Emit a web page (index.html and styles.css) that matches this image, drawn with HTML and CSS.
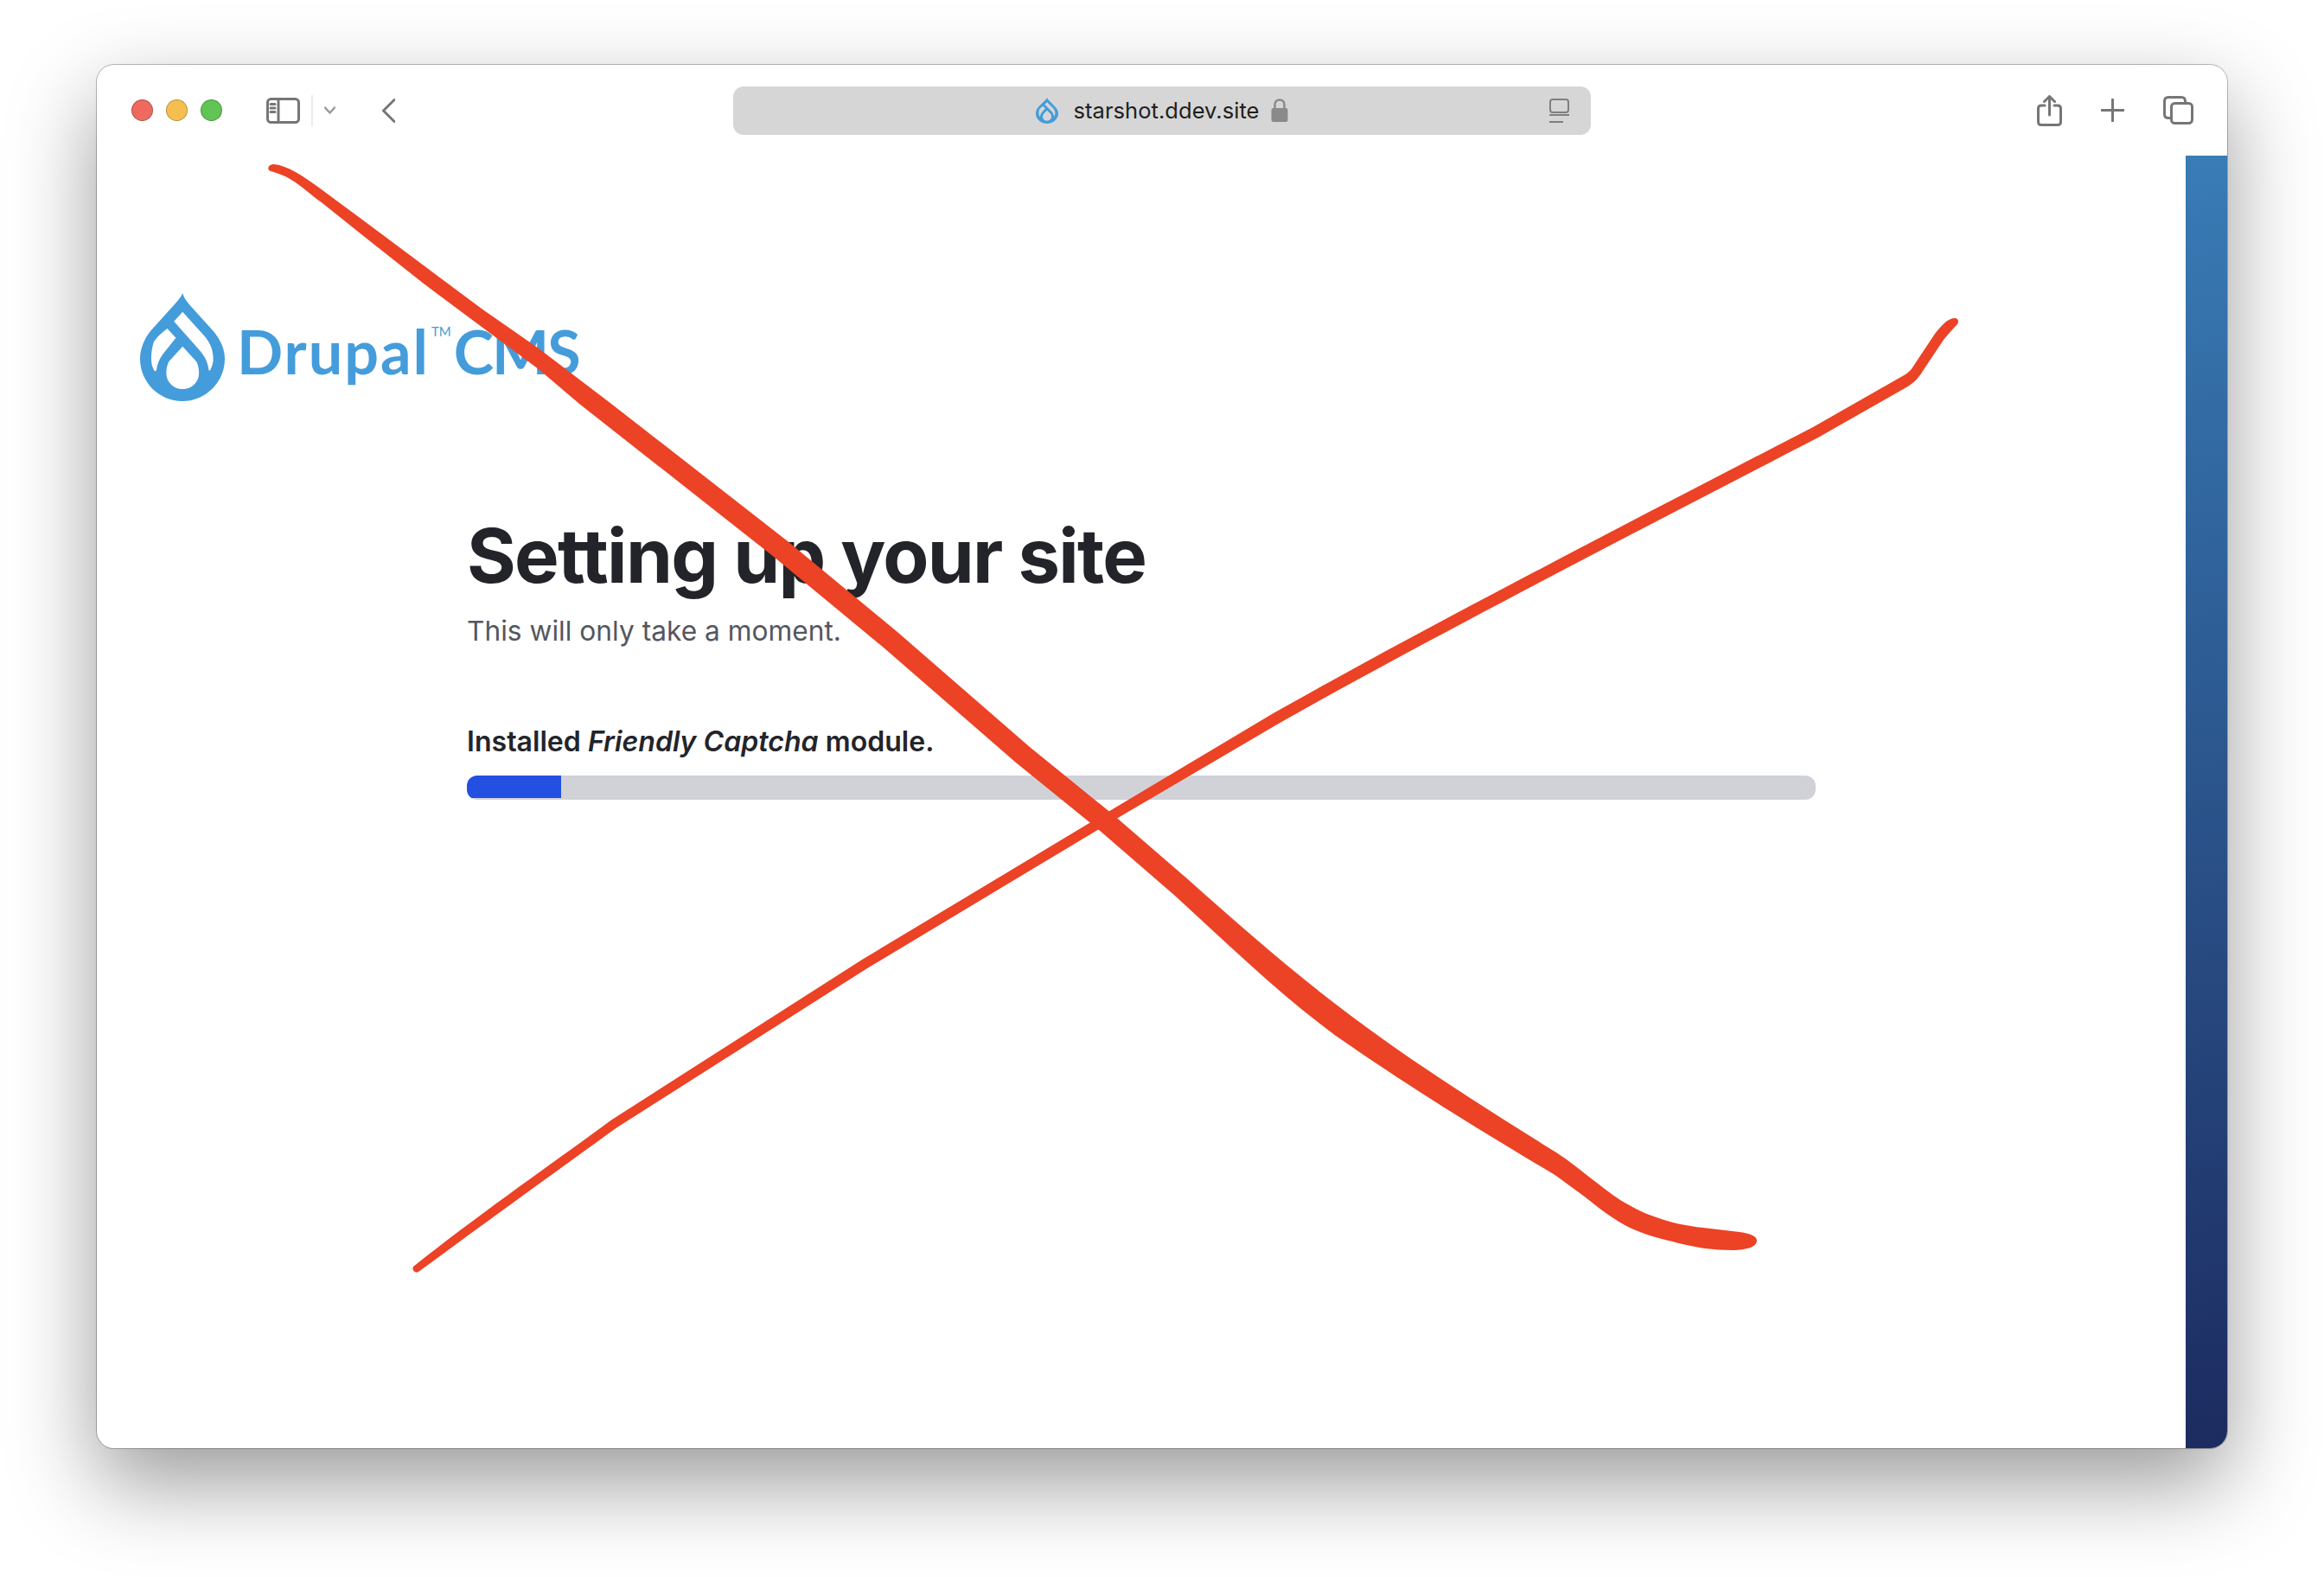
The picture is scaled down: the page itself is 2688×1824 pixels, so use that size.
FILE: index.html
```html
<!DOCTYPE html>
<html lang="en">

<head>
  <meta charset="UTF-8">
  <title>Drupal CMS</title>
  <link rel="stylesheet" href="styles.css">
</head>

<body>
  <svg class="defs" width="0" height="0">
    <symbol id="drop" viewBox="0 0 98.4 125" preserveAspectRatio="none">
      <path fill-rule="evenodd" d="M49.4 0C50.5 5 54 9 57 13L86 45C93 54 98.4 64 98.4 76C98.4 103 76 125 49.4 125C22 125 0 103 0 76C0 64 5 53 12 44L41 12C44.5 8 48 4 49.4 0Z
        M49.4 21.7L74.4 49.3C80 56 85 64 85 76C85 81 83.5 85 81.5 89C80.5 90 80 90 79.8 89C79 84 78 80 76 76C74 72 71.5 69 69 66L39.4 32.7Z
        M31.6 41L41.6 51.7L26.2 71C22.5 76 20 82 19 89.3C18 90.5 16.8 90.5 16.2 89.3C14 85 13 81 13 76C13 69 14 63 15.5 57.7C18 52 25 46 31.6 41Z
        M49.4 61.7L65.5 79.3C67.5 83 68.4 88 68.4 92.7C68.4 103 60 111 49.4 111C39 111 30.5 103 30.5 92.7C30.5 88 31.5 83 33.4 79.3Z" />
    </symbol>
  </svg>

  <div class="window">
    <!-- Browser toolbar -->
    <div class="toolbar">
      <div class="toolbar-left">
        <div class="lights">
          <span class="light red"></span>
          <span class="light yellow"></span>
          <span class="light green"></span>
        </div>
        <svg class="icon sidebar-icon" width="39" height="30" viewBox="0 0 39 30">
          <rect x="1.5" y="1.5" width="36" height="27" rx="4" />
          <path d="M14 2V28M5 7.5H10M5 12H10M5 16.5H10" />
        </svg>
        <span class="divider"></span>
        <svg class="icon chevron-icon" width="13" height="9" viewBox="0 0 13 9">
          <path d="M1 1.5L6.5 7.5L12 1.5" />
        </svg>
        <svg class="icon back-icon" width="15" height="28" viewBox="0 0 15 28">
          <path d="M14 1.5L1.5 14L14 26.5" />
        </svg>
      </div>

      <div class="url-bar">
        <span></span>
        <div class="url">
          <svg class="favicon" width="26" height="30"><use href="#drop" /></svg>
          <span class="url-text">starshot.ddev.site</span>
          <svg class="lock" width="20" height="27" viewBox="0 0 20 27">
            <path class="lock-arc" d="M4.5 12V7C4.5 3.5 7 1.5 10 1.5C13 1.5 15.5 3.5 15.5 7V12" />
            <rect x="0.5" y="11" width="19" height="16" rx="2.5" />
          </svg>
        </div>
        <svg class="reader" width="23" height="28" viewBox="0 0 23 28">
          <rect x="1" y="1" width="21" height="15" rx="3" />
          <path d="M0 19H23M0 27H16" />
        </svg>
      </div>

      <div class="toolbar-right">
        <svg class="icon" width="29" height="36" viewBox="0 0 29 36">
          <path d="M9 12H5C2.8 12 1.5 13.3 1.5 15.5V31C1.5 33.2 2.8 34.5 5 34.5H24C26.2 34.5 27.5 33.2 27.5 31V15.5C27.5 13.3 26.2 12 24 12H20" />
          <path d="M14.5 23V1.5M8.5 7.5L14.5 1.5L20.5 7.5" />
        </svg>
        <svg class="icon" width="27" height="27" viewBox="0 0 27 27">
          <path d="M13.5 1V26M1 13.5H26" />
        </svg>
        <svg class="icon" width="35" height="33" viewBox="0 0 35 33">
          <path d="M8.5 25.5H6C3 25.5 1.5 24 1.5 21V6C1.5 3 3 1.5 6 1.5H21C24 1.5 25.5 3 25.5 6V8.5" />
          <rect x="9.5" y="8.5" width="24" height="23" rx="4" />
        </svg>
      </div>
    </div>

    <div class="page">
      <div class="main">
        <div class="logo">
          <svg class="logo-drop" width="98" height="125"><use href="#drop" /></svg>
          <span class="logo-name">Drupal</span>
          <span class="logo-tm">TM</span>
          <span class="logo-name logo-cms">CMS</span>
        </div>

        <div class="setup">
          <h1>Setting up your site</h1>
          <p class="lead">This will only take a moment.</p>
          <p class="status">Installed <em>Friendly Captcha</em> module.</p>
          <div class="progress">
            <div class="progress-fill" style="width: 7%"></div>
          </div>
        </div>
      </div>
      <div class="side"></div>
    </div>
  </div>

  <!-- Red cross drawn over the screenshot -->
  <svg class="scribble" width="2688" height="1824" viewBox="0 0 2688 1824">
    <path d="M317 190C325 191 333 194 340 198C351 204 362 212 373 220L423 257L490 307L557 357L623 403L707 467L911 626L1038 731L1191 864L1286 941L1375 1018C1440 1076 1500 1128 1560 1173C1640 1233 1720 1283 1800 1333C1826 1350 1850 1372 1874 1388C1888 1396 1900 1403 1913 1407C1932 1414 1950 1418 1970 1420L2012 1425C2026 1427 2032 1430 2032 1435C2032 1442 2020 1446 2004 1446C1982 1446 1962 1443 1942 1438C1922 1433 1902 1428 1885 1420C1866 1410 1850 1398 1834 1385L1800 1360C1720 1312 1640 1264 1545 1198C1480 1150 1420 1092 1359 1036L1270 959L1175 882L1022 749L895 644L670 467L623 427L557 378L490 328L423 275L373 235C360 226 349 215 337 208C329 203 321 200 313 198C308 196 310 190 317 190Z" />
    <path d="M478 1465C560 1400 640 1345 707 1295.5L997 1110L1275 943L1471 826C1640 730 1900 596 2097 494L2204 433C2210 429 2213 424 2216 419L2238 386C2246 376 2253 368 2261 368C2265 368 2266 372 2264 375C2258 381 2253 387 2248 393L2226 426C2220 436 2214 443 2205 448L2103 506C1906 608 1646 742 1477 838L1281 953L1003 1120L713 1304.5C650 1350 570 1408 484 1471C480 1473 476 1469 478 1465Z" />
  </svg>
</body>

</html>
```

FILE: styles.css
```css
body {
  margin: 0;
  padding: 75px 112px 0;
  height: 1824px;
  box-sizing: border-box;
  background: #fff;
  font-family: Inter, sans-serif;
  overflow: hidden;
}

.defs {
  position: absolute;
}

.window {
  height: 1600px;
  display: flex;
  flex-direction: column;
  background: #fff;
  border-radius: 20px;
  overflow: hidden;
  box-shadow: 0 0 0 1px rgba(0, 0, 0, 0.25), 0 40px 100px rgba(0, 0, 0, 0.4);
}

/* toolbar */
.toolbar {
  height: 105px;
  flex: none;
  display: grid;
  grid-template-columns: 1fr 992px 1fr;
  align-items: center;
}

.toolbar-left {
  display: flex;
  align-items: center;
  padding-left: 40px;
}

.lights {
  display: flex;
  gap: 15px;
  margin-right: 51px;
}

.light {
  width: 25px;
  height: 25px;
  box-sizing: border-box;
  border-radius: 50%;
  border: 1px solid rgba(0, 0, 0, 0.25);
}

.red {
  background: #ee6a5f;
}

.yellow {
  background: #f5bf4f;
}

.green {
  background: #61c454;
}

.icon {
  fill: none;
  stroke: #767676;
  stroke-width: 3;
  stroke-linecap: round;
  stroke-linejoin: round;
}

.divider {
  width: 2px;
  height: 36px;
  margin: 0 13px;
  background: #ececec;
}

.chevron-icon {
  stroke: #999;
  stroke-width: 2.5;
  margin-right: 54px;
}

.url-bar {
  height: 56px;
  display: grid;
  grid-template-columns: 1fr auto 1fr;
  align-items: center;
  background: #d6d6d6;
  border-radius: 12px;
}

.url {
  display: flex;
  align-items: center;
  gap: 18px;
}

.favicon {
  fill: #449cdb;
}

.url-text {
  font-size: 25.6px;
  line-height: 32px;
  margin: 1px -4px 0 0;
  color: #1f1f1f;
}

.lock rect {
  fill: #8a8a8a;
}

.lock-arc {
  fill: none;
  stroke: #8a8a8a;
  stroke-width: 2.5;
}

.reader {
  justify-self: end;
  margin-right: 25px;
  fill: none;
  stroke: #7f7f7f;
  stroke-width: 2;
}

.toolbar-right {
  display: flex;
  align-items: center;
  justify-content: flex-end;
  gap: 45px;
  padding-right: 39px;
}

/* page */
.page {
  flex: 1;
  display: flex;
}

.main {
  flex: 1;
  padding: 159px 0 0 50px;
}

.side {
  width: 48px;
  background: linear-gradient(172deg, #397cb6, #1c2b60);
}

.logo {
  display: flex;
  align-items: flex-start;
  height: 125px;
  color: #449cdb;
}

.logo-drop {
  fill: #449cdb;
  margin-right: 14px;
}

.logo-name {
  font-family: Lato, sans-serif;
  font-weight: 700;
  font-size: 70px;
  line-height: 70px;
  letter-spacing: 2px;
  margin-top: 32px;
}

.logo-tm {
  font-family: Lato, sans-serif;
  font-size: 15px;
  line-height: 15px;
  margin: 37px 3px 0 2px;
}

.logo-cms {
  letter-spacing: -2px;
}

.setup {
  width: 1560px;
  margin: 129px 0 0 378px;
}

h1 {
  margin: 0;
  font-size: 86.8px;
  line-height: 100px;
  font-weight: 700;
  letter-spacing: -0.02em;
  color: #23242a;
}

.lead {
  margin: 13px 0 0;
  font-size: 31.7px;
  line-height: 48px;
  color: #55565f;
}

.status {
  margin: 84px 0 0;
  font-size: 32.1px;
  line-height: 40px;
  font-weight: 600;
  color: #23242a;
}

.progress {
  height: 28px;
  margin-top: 19px;
  background: #d1d2d8;
  border-radius: 12px;
  overflow: hidden;
}

.progress-fill {
  height: 26px;
  background: #2350e0;
}

/* red cross */
.scribble {
  position: absolute;
  top: 0;
  left: 0;
  pointer-events: none;
  fill: #ec4225;
}
```
